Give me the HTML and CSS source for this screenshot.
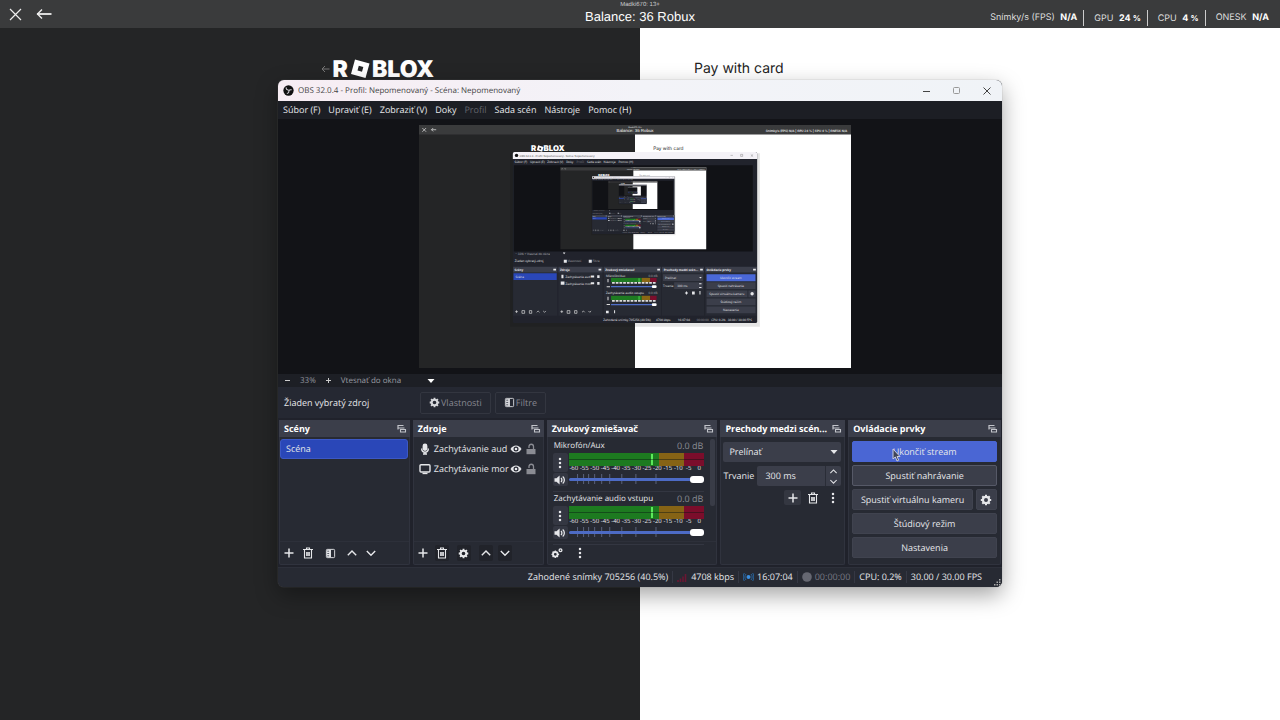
FILE: index.html
```html
<!DOCTYPE html>
<html lang="sk">
<head>
<meta charset="utf-8">
<title>OBS 32.0.4</title>
<link rel="stylesheet" href="styles.css">
</head>
<body>
<svg class="sprite" aria-hidden="true">
  <defs>
    <symbol id="i-plus" viewBox="0 0 12 12"><path d="M6 1.5v9M1.5 6h9" fill="none" stroke="currentColor" stroke-width="1.5"/></symbol>
    <symbol id="i-trash" viewBox="0 0 12 12"><path d="M1 2.5h10M4.5 2V1h3v1M2.5 3v8h7V3M4.7 5v4M6 5v4M7.3 5v4" fill="none" stroke="currentColor" stroke-width="1.1"/></symbol>
    <symbol id="i-filter" viewBox="0 0 12 12"><rect x="1.5" y="1.5" width="9" height="9" rx="1" fill="none" stroke="currentColor"/><path d="M2 2h4.500v8H2z" fill="currentColor"/><path d="M2.500 3.500h2M2.500 6h2M2.500 8.500h2" stroke="#50545f"/></symbol>
    <symbol id="i-up" viewBox="0 0 12 12"><path d="M1.800 8.200 6 4l4.200 4.200" fill="none" stroke="currentColor" stroke-width="1.400"/></symbol>
    <symbol id="i-down" viewBox="0 0 12 12"><path d="M1.800 4 6 8.200 10.200 4" fill="none" stroke="currentColor" stroke-width="1.400"/></symbol>
    <symbol id="i-gear" viewBox="0 0 12 12"><circle cx="6" cy="6" r="3.100" fill="none" stroke="currentColor" stroke-width="2.200"/><path d="M6 .8v1.700M6 9.500v1.700M.8 6h1.700M9.500 6h1.700M2.300 2.300l1.200 1.200M8.500 8.500l1.200 1.200M9.700 2.300 8.500 3.500M3.500 8.500 2.300 9.700" stroke="currentColor" stroke-width="2"/></symbol>
    <symbol id="i-gears" viewBox="0 0 12 12"><circle cx="4.300" cy="7.300" r="2.300" fill="none" stroke="currentColor" stroke-width="1.800"/><path d="M4.300 3.500v7.600M.5 7.300h1.300M6.800 7.300h1.300M1.600 4.600l1 1M1.600 10l1-1M7 10 6 9" stroke="currentColor" stroke-width="1.200" stroke-dasharray="1.300 5"/><circle cx="9.500" cy="3.300" r="1.400" fill="none" stroke="currentColor" stroke-width="1.300"/></symbol>
    <symbol id="i-dots" viewBox="0 0 12 12"><g fill="currentColor"><circle cx="6" cy="2" r="1.250"/><circle cx="6" cy="6" r="1.250"/><circle cx="6" cy="10" r="1.250"/></g></symbol>
    <symbol id="i-dock" viewBox="0 0 10 10"><path d="M1 5.500V1.500h5.500" fill="none" stroke="currentColor" stroke-width="1.200"/><path d="M1 4h6.500" stroke="currentColor"/><path d="M3.500 5.500h5v2.500h-5z" fill="none" stroke="currentColor" stroke-width="1.100"/></symbol>
    <symbol id="i-mic" viewBox="0 0 12 12"><rect x="3.600" y=".6" width="4.800" height="7.400" rx="2.400" fill="currentColor"/><path d="M2.700 5.500c0 5 6.600 5 6.600 0M6 8.500v2M4 11h4" fill="none" stroke="currentColor" stroke-width="1.400"/></symbol>
    <symbol id="i-screen" viewBox="0 0 12 12"><rect x="1" y="1.800" width="10" height="7.200" rx="1" fill="none" stroke="currentColor" stroke-width="1.400"/><path d="M3.500 10.500h5" stroke="currentColor" stroke-width="1.300"/></symbol>
    <symbol id="i-eye" viewBox="0 0 12 12"><path d="M.5 6C3 1.200 9 1.200 11.500 6 9 10.800 3 10.800.5 6z" fill="currentColor"/><circle cx="6" cy="6" r="2.500" fill="#252832"/><circle cx="6" cy="6" r="1.300" fill="currentColor"/></symbol>
    <symbol id="i-lock" viewBox="0 0 12 12"><path d="M1.500 6h9v5.200h-9z" fill="currentColor"/><path d="M4 5V3.500c0-3 4.500-3 4.500 0V6" fill="none" stroke="currentColor" stroke-width="1.300"/></symbol>
    <symbol id="i-sound" viewBox="0 0 12 12"><path d="M.5 4.200h2L5.600 1.500v9L2.500 7.800h-2z" fill="currentColor"/><path d="M7 4c1.200 1 1.200 3 0 4M8.700 2.500c2.200 1.800 2.200 5.200 0 7" fill="none" stroke="currentColor" stroke-width="1.300"/></symbol>
    <symbol id="i-caret" viewBox="0 0 8 8"><path d="M.5 2h7L4 6z" fill="currentColor"/></symbol>

    <g id="dock-tools"><path d="M0 5h8M4 1v8M20 2h8v8h-8zM42 2h7v8h-7zM64 7l4-4 4 4M83 3l4 4 4-4" fill="none" stroke="#ddd" stroke-width="2"/></g>
    <g id="mini-strip">
      <path d="M569 453h91v13h-91z" fill="#1e7a21"/><path d="M660 453h25v13h-25z" fill="#8a6714"/><path d="M685 453h19v13h-19z" fill="#7c0e2c"/>
      <path d="M652 454v11" stroke="#6f6" stroke-width="2"/><path d="M569 479h126" stroke="#4f6fc8" stroke-width="4"/><rect x="690" y="475" width="14" height="8" rx="3" fill="#fff"/>
      <path d="M572 468h130" stroke="#ddd" stroke-width="5" stroke-dasharray="8 3"/><path d="M560 456v10M556 479h10" stroke="#ddd" stroke-width="3"/>
    </g>
    <g id="desktop">
      <path d="M0 0h640v720H0z" fill="#242526"/><path d="M640 0h640v720H640z" fill="#fff"/><path d="M0 0h1280v28H0z" fill="#3a3b3c"/>
      <path d="M10 9l11 11M21 9 10 20M37 14h14M42 9l-5 5 5 5" stroke="#eee" stroke-width="2" fill="none"/>
      <text x="640" y="8" class="t-tiny" text-anchor="middle">Madki670: 13+</text>
      <text x="640" y="22" class="t-balance" text-anchor="middle">Balance: 36 Robux</text>
      <text x="1269" y="22" class="t-stats" text-anchor="end">Snímky/s (FPS) N/A | GPU 24 % | CPU 4 % | ONESK N/A</text>
      <text x="332" y="77" class="t-logo">R</text><text x="369" y="77" class="t-logo">BLOX</text>
      <path d="M353 60l16 5-4 14-16-4z" fill="#fff"/><path d="M357 67l5 1-1 5-5-1z" fill="#242526"/>
      <text x="694" y="73" class="t-pay">Pay with card</text>
      <path d="M270 84h740v514H270z" fill="#000" opacity=".1"/>
      <rect x="278" y="80" width="724" height="507" rx="5" fill="#21232c"/><path d="M278 101V85q0-5 5-5h714q5 0 5 5v16z" fill="#f4f2f7"/>
      <circle cx="289" cy="90" r="5" fill="#111"/>
      <text x="298" y="94" class="t-title">OBS 32.0.4 - Profil: Nepomenovaný - Scéna: Nepomenovaný</text>
      <path d="M923 90h7M953 87h6v6h-6zM983 87l7 7M990 87l-7 7" stroke="#555" fill="none"/>
      <g class="t-ui">
        <text x="283" y="113">Súbor (F)</text><text x="329" y="113">Upraviť (E)</text><text x="380" y="113">Zobraziť (V)</text><text x="436" y="113">Doky</text><text x="467" y="113" opacity=".4">Profil</text><text x="498" y="113">Sada scén</text><text x="547" y="113">Nástroje</text><text x="591" y="113">Pomoc (H)</text>
        <path d="M281 119h708v256H281z" fill="#111216"/>
        <text x="285" y="384" opacity=".7">− 33% + Vtesnať do okna</text><text x="284" y="407">Žiaden vybratý zdroj</text><text x="440" y="407" opacity=".6">Vlastnosti</text><text x="514" y="407" opacity=".6">Filtre</text>
        <path d="M429 399h9v9h-9zM503 399h9v9h-9zM426 378h8l-4 5z"/>
        <path d="M279 437h131v128H279zM413 437h131v128H413zM547 437h171v128H547zM720 437h125v128H720zM848 437h153v128H848z" fill="#272a33"/>
        <path d="M279 420h131v17H279zM413 420h131v17H413zM547 420h171v17H547zM720 420h125v17H720zM848 420h153v17H848z" fill="#3b3e4a"/>
        <g font-weight="bold"><text x="283" y="433">Scény</text><text x="418" y="433">Zdroje</text><text x="552" y="433">Zvukový zmiešavač</text><text x="725" y="433">Prechody medzi scén...</text><text x="852" y="433">Ovládacie prvky</text></g>
        <path d="M398 426h8v5h-8zM532 426h8v5h-8zM706 426h8v5h-8zM833 426h8v5h-8zM990 426h8v5h-8z"/>
        <path d="M280 439h128v20H280z" fill="#2a47b8"/><text x="286" y="453">Scéna</text>
        <text x="434" y="453">Zachytávanie aud</text><text x="434" y="473">Zachytávanie mon</text>
        <path d="M422 444h6v10h-6zM420 464h11v9h-11zM509 446h10v6h-10zM509 466h10v6h-10zM528 445h7v8h-7zM528 465h7v8h-7z"/>
        <text x="554" y="450">Mikrofón/Aux</text><text x="680" y="450" opacity=".6">0.0 dB</text><text x="554" y="502">Zachytávanie audio vstupu</text><text x="680" y="502" opacity=".6">0.0 dB</text>
        <use href="#mini-strip"/><use href="#mini-strip" y="53"/>
        <use href="#dock-tools" x="285" y="548"/><use href="#dock-tools" x="419" y="548"/><path d="M554 550h8v8h-8zM578 549h3v9h-3z"/>
        <path d="M723 442h118v20H723zM756 466h85v20h-85z" fill="#3b3e4a"/><text x="729" y="456">Prelínať</text><text x="723" y="480">Trvanie</text><text x="765" y="480">300 ms</text>
        <path d="M830 450h8l-4 5zM788 496h9v3h-9zM791 493h3v9h-3zM809 493h8v9h-8zM831 492h3v10h-3zM830 469h7v3h-7zM830 480h7v3h-7z"/>
        <path d="M852 442h145v21H852z" fill="#4a68d8"/><path d="M852 466h145v20H852zM852 490h121v20H852zM976 490h21v20h-21zM852 514h145v20H852zM852 538h145v20H852z" fill="#3b3e4a"/>
        <g text-anchor="middle"><text x="924" y="456">Ukončiť stream</text><text x="924" y="480">Spustiť nahrávanie</text><text x="912" y="504">Spustiť virtuálnu kameru</text><text x="924" y="528">Štúdiový režim</text><text x="924" y="552">Nastavenia</text></g>
        <circle cx="987" cy="500" r="5"/>
        <text x="546" y="581">Zahodené snímky 705256 (40.5%)</text><text x="702" y="581">4708 kbps</text><text x="767" y="581">16:07:04</text><text x="823" y="581" opacity=".5">00:00:00</text><text x="866" y="581">CPU: 0.2%</text><text x="915" y="581">30.00 / 30.00 FPS</text>
      </g>
    </g>
    <g id="level-3"><use href="#desktop"/><use href="#desktop" transform="translate(419 125) scale(.3375)"/></g>
    <g id="level-2"><use href="#desktop"/><use href="#level-3" transform="translate(419 125) scale(.3375)"/></g>
  </defs>
</svg>

<header class="topbar">
  <div class="topbar-nav">
    <button class="icon-btn" aria-label="Zavrieť"><svg width="13" height="13" viewBox="0 0 13 13"><path d="M1 1l11 11M12 1 1 12" stroke="currentColor" stroke-width="1.200"/></svg></button>
    <button class="icon-btn" aria-label="Späť"><svg width="16" height="12" viewBox="0 0 16 12"><path d="M1 6h14.500" stroke="currentColor" stroke-width="1.800"/><path d="M6 1.500 1.500 6 6 10.500" fill="none" stroke="currentColor" stroke-width="1.400"/></svg></button>
  </div>
  <div class="account"><span class="user">Madki670: 13+</span><span class="balance">Balance: 36 Robux</span></div>
  <ul class="stats">
    <li>Snímky/s (FPS) <b>N/A</b></li><li>GPU <b>24 <small>%</small></b></li><li>CPU <b>4 <small>%</small></b></li><li>ONESK <b>N/A</b></li>
  </ul>
</header>

<main class="checkout">
  <section class="brand-side">
    <div class="brand">
      <svg class="brand-back" width="9" height="8" viewBox="0 0 9 8"><path d="M8.500 4H1M4 1 1 4l3 3" fill="none" stroke="#777" /></svg>
      <span class="logo">R<svg width="20" height="20" viewBox="0 0 20 20"><path fill-rule="evenodd" fill="#fff" d="M5 .5 19.500 4.500 15.500 19 1 15zM8.800 6.800 7.500 11.500 12 12.700 13.300 8z"/></svg>BLOX</span>
    </div>
  </section>
  <section class="card-side"><h1>Pay with card</h1></section>
</main>

<div class="window">
  <div class="titlebar">
    <svg width="11" height="11" viewBox="0 0 12 12"><circle cx="6" cy="6" r="5.600" fill="#111"/><path d="M3.600 2.500c-.6 1.800.8 3.300 2.600 2.900M9.600 5.300c-1.700-.7-3.500.4-3.300 2.300M4.200 9.200c1.800 0 2.700-1.500 2-3" fill="none" stroke="#d8d5dc" stroke-width="1.100"/></svg>
    <span class="title">OBS 32.0.4 - Profil: Nepomenovaný - Scéna: Nepomenovaný</span>
    <div class="window-controls">
      <button aria-label="Minimalizovať"><svg width="8" height="8"><path d="M0 4.500h7" stroke="#444"/></svg></button>
      <button aria-label="Maximalizovať"><svg width="8" height="8"><rect x=".5" y=".5" width="6" height="6" rx="1" fill="none" stroke="#999"/></svg></button>
      <button aria-label="Zatvoriť"><svg width="8" height="8"><path d="M.5.5l7 7M7.500.5l-7 7" stroke="#444"/></svg></button>
    </div>
  </div>
  <nav class="menubar">
    <button>Súbor (F)</button><button>Upraviť (E)</button><button>Zobraziť (V)</button><button>Doky</button><button disabled>Profil</button><button>Sada scén</button><button>Nástroje</button><button>Pomoc (H)</button>
  </nav>
  <div class="preview">
    <svg class="canvas" viewBox="0 0 1280 720" aria-hidden="true"><use href="#desktop"/><use href="#level-2" transform="translate(419 125) scale(.3375)"/></svg>
  </div>
  <div class="zoombar">
    <button class="zoom-step" aria-label="Oddialiť"><svg width="7" height="7"><path d="M1 3.500h5" stroke="currentColor"/></svg></button>
    <span class="zoom-value">33%</span>
    <button class="zoom-step" aria-label="Priblížiť"><svg width="7" height="7"><path d="M1 3.500h5M3.500 1v5" stroke="currentColor"/></svg></button>
    <button class="fit">Vtesnať do okna <svg width="8" height="8"><use href="#i-caret"/></svg></button>
  </div>
  <div class="source-bar">
    <span class="source-name">Žiaden vybratý zdroj</span>
    <button disabled><svg width="11" height="11"><use href="#i-gear"/></svg>Vlastnosti</button>
    <button disabled><svg width="11" height="11"><use href="#i-filter"/></svg>Filtre</button>
  </div>

  <div class="docks">
    <section class="dock">
      <h2><span>Scény</span><svg width="10" height="10"><use href="#i-dock"/></svg></h2>
      <button class="scene">Scéna</button>
      <div class="tools">
        <button aria-label="Pridať scénu"><svg><use href="#i-plus"/></svg></button>
        <button aria-label="Odstrániť scénu"><svg><use href="#i-trash"/></svg></button>
        <button class="wide" aria-label="Filtre scény"><svg><use href="#i-filter"/></svg></button>
        <button aria-label="Scéna vyššie"><svg><use href="#i-up"/></svg></button>
        <button aria-label="Scéna nižšie"><svg><use href="#i-down"/></svg></button>
      </div>
    </section>

    <section class="dock">
      <h2><span>Zdroje</span><svg width="10" height="10"><use href="#i-dock"/></svg></h2>
      <ul class="sources">
        <li><svg><use href="#i-mic"/></svg><span>Zachytávanie aud</span><button aria-label="Viditeľnosť"><svg><use href="#i-eye"/></svg></button><button class="lock" aria-label="Zámok"><svg><use href="#i-lock"/></svg></button></li>
        <li><svg><use href="#i-screen"/></svg><span>Zachytávanie mor</span><button aria-label="Viditeľnosť"><svg><use href="#i-eye"/></svg></button><button class="lock" aria-label="Zámok"><svg><use href="#i-lock"/></svg></button></li>
      </ul>
      <div class="tools">
        <button aria-label="Pridať zdroj"><svg><use href="#i-plus"/></svg></button>
        <button class="shade" aria-label="Odstrániť zdroj"><svg><use href="#i-trash"/></svg></button>
        <button class="wide shade" aria-label="Vlastnosti zdroja"><svg><use href="#i-gear"/></svg></button>
        <button class="shade" aria-label="Zdroj vyššie"><svg><use href="#i-up"/></svg></button>
        <button class="shade" aria-label="Zdroj nižšie"><svg><use href="#i-down"/></svg></button>
      </div>
    </section>

    <section class="dock">
      <h2><span>Zvukový zmiešavač</span><svg width="10" height="10"><use href="#i-dock"/></svg></h2>
      <div class="mixer">
        <div class="strips">
          <div class="strip">
            <div class="strip-head"><label for="vol-mic">Mikrofón/Aux</label><output>0.0 dB</output></div>
            <button class="strip-menu" aria-label="Možnosti"><svg><use href="#i-dots"/></svg></button>
            <div class="meter"><div class="bars"><i class="peak"></i></div><div class="scale"><span>-60</span><span>-55</span><span>-50</span><span>-45</span><span>-40</span><span>-35</span><span>-30</span><span>-25</span><span>-20</span><span>-15</span><span>-10</span><span>-5</span><span>0</span></div></div>
            <button class="mute" aria-label="Stlmiť"><svg><use href="#i-sound"/></svg></button>
            <div class="fader"><svg viewBox="0 0 135 10" preserveAspectRatio="none"><path d="M8.500 0v10M14.500 0v10M19.500 0v10M25.500 0v10M32.500 0v10M40.500 0v10M52.500 0v10M66.500 0v10M86.500 0v10" stroke="#59617a"/></svg><input id="vol-mic" type="range" min="0" max="100" value="100"></div>
          </div>
          <div class="strip">
            <div class="strip-head"><label for="vol-in">Zachytávanie audio vstupu</label><output>0.0 dB</output></div>
            <button class="strip-menu" aria-label="Možnosti"><svg><use href="#i-dots"/></svg></button>
            <div class="meter"><div class="bars"><i class="peak"></i></div><div class="scale"><span>-60</span><span>-55</span><span>-50</span><span>-45</span><span>-40</span><span>-35</span><span>-30</span><span>-25</span><span>-20</span><span>-15</span><span>-10</span><span>-5</span><span>0</span></div></div>
            <button class="mute" aria-label="Stlmiť"><svg><use href="#i-sound"/></svg></button>
            <div class="fader"><svg viewBox="0 0 135 10" preserveAspectRatio="none"><path d="M8.500 0v10M14.500 0v10M19.500 0v10M25.500 0v10M32.500 0v10M40.500 0v10M52.500 0v10M66.500 0v10M86.500 0v10" stroke="#59617a"/></svg><input id="vol-in" type="range" min="0" max="100" value="100"></div>
          </div>
        </div>
        <div class="scrollbar"></div>
      </div>
      <div class="tools mixer-tools">
        <button aria-label="Pokročilé vlastnosti zvuku"><svg><use href="#i-gears"/></svg></button>
        <button aria-label="Ponuka zmiešavača"><svg><use href="#i-dots"/></svg></button>
      </div>
    </section>

    <section class="dock">
      <h2><span>Prechody medzi scén...</span><svg width="10" height="10"><use href="#i-dock"/></svg></h2>
      <div class="transitions">
        <div class="select"><select aria-label="Prechod"><option>Prelínať</option></select><svg width="8" height="8"><use href="#i-caret"/></svg></div>
        <div class="duration">
          <label for="duration">Trvanie</label>
          <div class="spin"><input id="duration" type="text" value="300 ms"><div class="arrows"><button aria-label="Viac"><svg><use href="#i-up"/></svg></button><button aria-label="Menej"><svg><use href="#i-down"/></svg></button></div></div>
        </div>
        <div class="transition-tools">
          <button class="filled" aria-label="Pridať prechod"><svg><use href="#i-plus"/></svg></button>
          <button aria-label="Odstrániť prechod"><svg><use href="#i-trash"/></svg></button>
          <button aria-label="Vlastnosti prechodu"><svg><use href="#i-dots"/></svg></button>
        </div>
      </div>
    </section>

    <section class="dock">
      <h2><span>Ovládacie prvky</span><svg width="10" height="10"><use href="#i-dock"/></svg></h2>
      <div class="controls">
        <button class="live">Ukončiť stream<svg class="cursor" width="9" height="14" viewBox="0 0 9 14"><path d="M1 1v10l2.300-2 1.700 4 1.700-.8L5 8.500h3z" fill="#3f4558" stroke="#c9cde0" /></svg></button>
        <button class="outlined">Spustiť nahrávanie</button>
        <div class="split"><button>Spustiť virtuálnu kameru</button><button aria-label="Nastaviť kameru"><svg><use href="#i-gear"/></svg></button></div>
        <button>Štúdiový režim</button>
        <button>Nastavenia</button>
      </div>
    </section>
  </div>

  <footer class="statusbar">
    <span>Zahodené snímky 705256 (40.5%)</span>
    <span><svg width="11" height="10"><path d="M1 8v2M3.500 6.500V10M6 4.500V10M8.500 2v8" stroke="#6a1733" stroke-width="1.600"/></svg>4708 kbps</span>
    <span><svg width="11" height="10"><circle cx="5.500" cy="5" r="2" fill="#3a8ee0"/><path d="M3 2C1.500 3.500 1.500 6.500 3 8M8 2c1.500 1.500 1.500 4.500 0 6M1.300 1C-.2 3.500-.2 6.500 1.300 9M9.700 1c1.500 2.500 1.500 5.500 0 8" fill="none" stroke="#28659f"/></svg>16:07:04</span>
    <span class="idle"><svg width="10" height="10"><circle cx="5" cy="5" r="4.800" fill="#666872"/></svg>00:00:00</span>
    <span>CPU: 0.2%</span>
    <span>30.00 / 30.00 FPS</span>
    <svg class="grip" width="7" height="7"><path d="M5 0h1.500v1.500H5zM2.500 2.500H4V4H2.500zM5 2.500h1.500V4H5zM0 5h1.500v1.500H0zM2.500 5H4v1.500H2.500zM5 5h1.500v1.500H5z" fill="#aaa"/></svg>
  </footer>
</div>
</body>
</html>
```
FILE: styles.css
```css
* { box-sizing: border-box; }
body { margin: 0; min-height: 100vh; display: flex; flex-direction: column; position: relative; background: #242526; color: #e6e7ea; font-family: "Open Sans", "Noto Sans", sans-serif; font-size: 9px; line-height: 12px; text-rendering: geometricPrecision; }
button, input, select { font: inherit; color: inherit; margin: 0; padding: 0; border: 0; background: none; text-rendering: inherit; }
button { display: inline-flex; align-items: center; justify-content: center; white-space: nowrap; }
ul { list-style: none; margin: 0; padding: 0; }
svg { flex: none; display: block; }
.sprite { position: absolute; width: 0; height: 0; }

.topbar { height: 28px; display: grid; grid-template-columns: 1fr auto 1fr; background: #3a3b3c; color: #eee; font-family: "Liberation Sans", Arial, sans-serif; }
.topbar-nav { display: flex; align-items: center; gap: 14px; padding-left: 9px; }
.account { display: flex; flex-direction: column; align-items: center; padding-top: 2px; }
.user { font-size: 6px; line-height: 7px; color: #ccc; }
.balance { font-size: 13px; line-height: 16px; color: #fff; }
.stats { display: flex; justify-content: flex-end; align-self: end; padding: 0 11px 2px 0; font-family: Inter, "Liberation Sans", sans-serif; font-size: 9px; line-height: 14px; white-space: nowrap; color: #ddd; }
.stats li { padding: 1px 0 0 10px; }
.stats li + li { margin-left: 6px; border-left: 1px solid #ccc; }
.stats b { margin-left: 3px; color: #fff; }
.stats small { font-size: 8px; }

.checkout { flex: 1; display: grid; grid-template-columns: 1fr 1fr; }
.brand-side { display: flex; flex-direction: column; align-items: flex-end; padding: 30px 206px 0 0; background: #242526; }
.brand { display: flex; align-items: center; gap: 3px; }
.logo { display: flex; align-items: center; gap: 2px; font: 900 23px/22px Inter, sans-serif; color: #fff; }
.card-side { background: #fff; color: #222; padding: 32px 0 0 54px; }
.card-side h1 { margin: 0; font: 400 14px/18px Inter, sans-serif; }

.window { position: absolute; top: 80px; left: 0; right: 0; margin: 0 auto; width: 56%; min-width: 724px; border-radius: 6px; overflow: hidden; background: #20222b; box-shadow: 0 0 1px #777, 0 8px 22px rgba(0, 0, 0, .36); }
.titlebar { height: 21px; display: flex; align-items: center; gap: 4px; padding-left: 5px; background: linear-gradient(90deg, #f7edf3, #f3f3f8 50%, #f0f3f7); color: #444; font-size: 8px; }
.title { flex: 1; }
.window-controls { display: flex; gap: 22px; padding-right: 11px; }
.menubar { height: 18px; display: flex; align-items: center; gap: 8px; padding: 0 5px; background: #1c1e24; }
.menubar button:disabled { color: #62646b; }
.preview { padding: 6px 10px 6px 0; display: flex; justify-content: center; background: #121317; }
.canvas { height: 243px; aspect-ratio: 16 / 9; fill: #e6e7ea; overflow: hidden; }
.zoombar { height: 13px; display: flex; align-items: center; gap: 9px; padding-left: 6px; background: #1d1f25; color: #999ba2; font-size: 8px; }
.zoom-step { color: #ccc; }
.fit { gap: 26px; }
.fit svg { color: #fff; }
.source-bar { height: 31px; display: flex; align-items: center; gap: 4px; padding-left: 6px; background: #252832; }
.source-name { width: 132px; }
.source-bar button { height: 22px; gap: 1px; padding: 0 8px; border: 1px solid #333640; border-radius: 2px; color: #85878f; }
.source-bar button svg { color: #d5d6da; }

.docks { display: grid; grid-template-columns: 131fr 131fr 171fr 125fr 153fr; gap: 3px; padding: 2px 1px; }
.dock { min-width: 0; height: 145px; display: flex; flex-direction: column; background: #272a33; border: 1px solid #30333e; border-top: 0; border-radius: 2px; }
.dock h2 { height: 17px; margin: 0 -1px; display: flex; align-items: center; justify-content: space-between; padding: 0 3px 0 5px; background: #3b3e4a; color: #fff; font-size: 9px; white-space: nowrap; }
.dock h2 svg { color: #c2c4ca; }
.scene { height: 20px; margin: 2px 1px 0 0; justify-content: flex-start; padding-left: 5px; background: #2a47b8; border: 1px solid #3c58c5; border-radius: 3px; }
.tools { margin-top: auto; height: 23px; display: flex; align-items: center; gap: 5px; padding: 0 2px; border-top: 1px solid #2d303a; }
.tools button { width: 14px; height: 16px; border-radius: 2px; }
.tools .wide { margin: 0 3px; }
.tools .shade { background: #21232a; }
.tools svg, .strip svg, .sources svg, .transition-tools svg, .split svg { width: 12px; height: 12px; }
.tools .wide svg { width: 11px; height: 11px; }
.mixer-tools { gap: 9px; }
.sources { padding: 2px 6px 0 5px; }
.sources li { height: 20px; display: flex; align-items: center; }
.sources span { flex: 1; min-width: 0; white-space: nowrap; margin-left: 3px; }
.sources .lock { margin-left: 3px; color: #8a8c93; }

.mixer { flex: 1; min-height: 0; display: flex; padding: 2px 1px 0 5px; }
.strips { flex: 1; min-width: 0; }
.strip { height: 53px; display: grid; grid-template: 14px 19px 14px / 15px 1fr; column-gap: 1px; border-bottom: 1px solid #333641; }
.strip-head { grid-column: 1 / -1; display: flex; justify-content: space-between; padding: 0 1px; font-size: 8px; line-height: 14px; }
.strip-head output { font-size: 9px; color: #8b8d95; }
.strip-menu, .mute { background: #343742; border-radius: 2px; }
.bars { height: 13px; position: relative; background: linear-gradient(90deg, #1d7a20 67%, #866315 67% 85%, #7b0d2b 85%); }
.bars::after { content: ""; position: absolute; inset: 6px 0 auto; height: 1px; background: rgba(10, 20, 20, .45); }
.peak { position: absolute; left: 61%; top: 1px; bottom: 1px; width: 2px; background: #5bea5b; }
.scale { display: grid; grid-template-columns: repeat(13, 1fr); font-size: 6px; line-height: 5px; }
.scale span { display: flex; justify-content: center; }
.mute { margin-top: 1px; }
.fader { position: relative; display: flex; align-items: center; }
.fader svg { position: absolute; left: 0; top: 2px; width: 100%; height: 10px; }
.fader input { position: relative; width: 100%; height: 8px; appearance: none; }
.fader input::-webkit-slider-runnable-track { height: 3px; background: #4d6bc5; border-radius: 2px; }
.fader input::-webkit-slider-thumb { appearance: none; width: 14px; height: 7px; margin-top: -2px; border-radius: 3px; background: #fff; }
.scrollbar { width: 5px; height: 67px; margin-left: 6px; border-radius: 2px; background: #393c47; }

.transitions { display: flex; flex-direction: column; gap: 4px; padding: 5px 3px 0 2px; }
.select { position: relative; height: 20px; background: #3b3e4a; border-radius: 2px; }
.select select { appearance: none; width: 100%; height: 20px; padding-left: 6px; }
.select svg { position: absolute; right: 3px; top: 6px; pointer-events: none; }
.duration { display: flex; align-items: center; gap: 3px; }
.spin { flex: 1; min-width: 0; height: 20px; display: flex; background: #3b3e4a; border-radius: 2px; }
.spin input { flex: 1; min-width: 0; padding-left: 8px; }
.arrows { width: 16px; display: flex; flex-direction: column; border-left: 1px solid #2a2d37; }
.arrows button { flex: 1; min-height: 0; }
.arrows svg { width: 9px; height: 9px; }
.transition-tools { display: flex; justify-content: flex-end; gap: 3px; }
.transition-tools button { width: 17px; height: 15px; border-radius: 2px; }
.transition-tools .filled { background: #343741; }

.controls { display: flex; flex-direction: column; gap: 3px; padding: 4px 3px 0 3px; }
.controls button { height: 21px; flex: none; background: #3b3e4a; border: 1px solid #40434f; border-radius: 2px; }
.controls .live { position: relative; background: #4a66d4; border-color: #4a66d4; }
.controls .outlined { border-color: #565967; }
.cursor { position: absolute; left: 27%; top: 6px; }
.split { display: flex; gap: 3px; }
.controls .split button:first-child { flex: 1; }
.controls .split button:last-child { width: 21px; }

.statusbar { height: 20px; position: relative; display: flex; align-items: center; justify-content: flex-end; padding: 0 16px 1px 0; background: #272a33; border-top: 1px solid #2d303a; white-space: nowrap; }
.statusbar span { display: flex; align-items: center; gap: 3px; padding: 0 4px; border-right: 1px solid #353844; }
.statusbar span:last-of-type { border: 0; }
.idle { color: #777983; }
.grip { position: absolute; right: 1px; bottom: 1px; }

.t-tiny { font: 6px "Liberation Sans", sans-serif; }
.t-balance { font: 13px "Liberation Sans", sans-serif; fill: #fff; }
.t-stats { font: 600 9px Inter, sans-serif; }
.t-logo { font: 900 23px Inter, sans-serif; fill: #fff; }
.t-pay { font: 14px Inter, sans-serif; fill: #222; }
.t-title { font: 8px "Open Sans", sans-serif; fill: #444; }
.t-ui { font-family: "Open Sans", sans-serif; font-size: 9px; fill: #e6e7ea; }
```
